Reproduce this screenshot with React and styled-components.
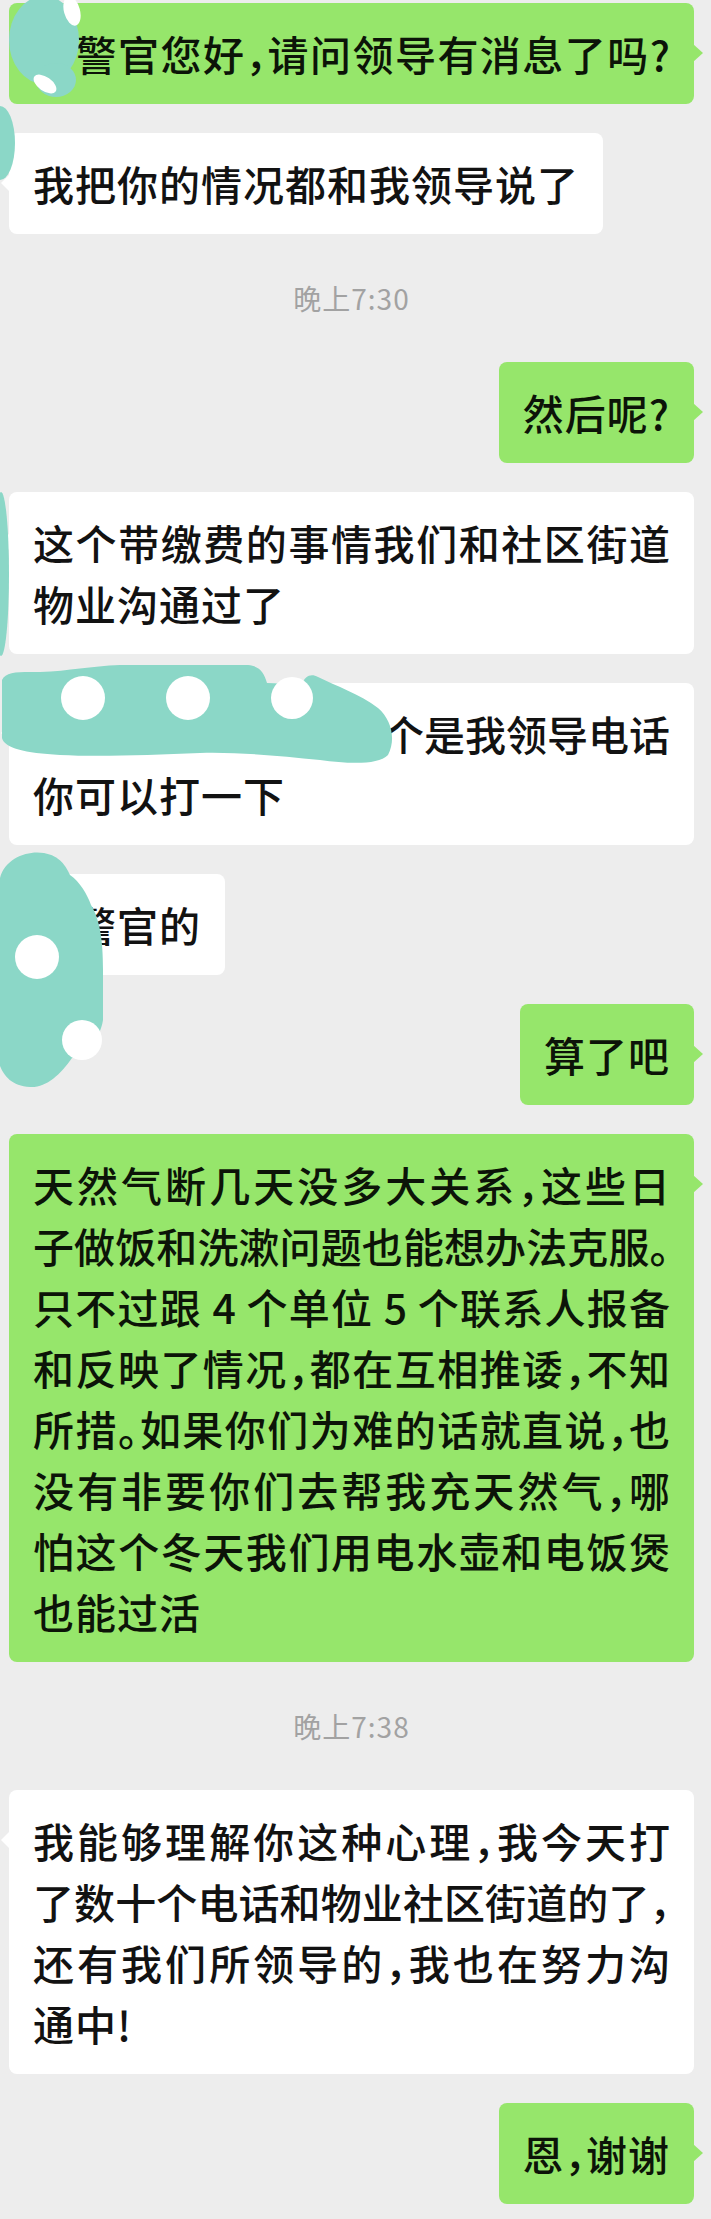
import React from "react";
import styled, { createGlobalStyle } from "styled-components";

const GlobalStyle = createGlobalStyle`
  html, body {
    margin: 0;
    padding: 0;
    background: #ededed;
    overflow: hidden;
  }
`;

const Page = styled.div`
  position: relative;
  box-sizing: border-box;
  width: 711px;
  min-height: 2219px;
  padding: 3px 17px 15px 9px;
  display: flex;
  flex-direction: column;
  gap: 29px;
  background: #ededed;
  font-family: "Noto Sans CJK SC", "Noto Sans", sans-serif;
`;

const Row = styled.div`
  display: flex;
  justify-content: ${(props) => (props.$mine ? "flex-end" : "flex-start")};
`;

const Bubble = styled.div`
  position: relative;
  box-sizing: border-box;
  width: ${(props) => (props.$wide ? "685px" : "auto")};
  padding: 20px 24px;
  border-radius: 8px;
  background: ${(props) => (props.$mine ? "#96e66b" : "#ffffff")};
  color: ${(props) => (props.$mine ? "#0c1408" : "#121212")};
  font-size: 41px;
  font-weight: 500;
  line-height: 61px;
  font-feature-settings: "halt";

  &::after {
    content: "";
    position: absolute;
    top: 41px;
    ${(props) => (props.$mine ? "right: -9px;" : "left: -8px;")}
    border-top: 9px solid transparent;
    border-bottom: 9px solid transparent;
    ${(props) =>
      props.$mine
        ? "border-left: 10px solid #96e66b;"
        : "border-right: 9px solid #ffffff;"}
  }
`;

const Line = styled.div`
  white-space: nowrap;
  letter-spacing: ${(props) => (props.$full ? "0" : "1px")};
  text-align: ${(props) => (props.$full ? "justify" : "left")};
  text-align-last: ${(props) => (props.$full ? "justify" : "auto")};
`;

// blank slot under a scribble, keeps the words after it in place
const Hidden = styled.span`
  display: inline-block;
  width: ${(props) => props.$w}px;
`;

const Stamp = styled.div`
  height: 70px;
  display: flex;
  align-items: center;
  justify-content: center;
  font-size: 28px;
  letter-spacing: 1px;
  color: #a2a2a2;
`;

const Scribbles = styled.svg`
  position: absolute;
  top: 0;
  left: 0;
  pointer-events: none;
`;

const TEAL = "#8bd7c7";

const Redactions = () => (
  <Scribbles width="711" height="2219" viewBox="0 0 711 2219">
    {/* top left, over the first bubble */}
    <ellipse cx="44" cy="40" rx="35" ry="44" fill={TEAL} />
    <ellipse cx="56" cy="80" rx="20" ry="17" fill={TEAL} />
    <ellipse cx="72" cy="11" rx="8" ry="15" fill="#ffffff" transform="rotate(-15 72 11)" />
    <ellipse cx="45" cy="84" rx="13" ry="7" fill="#ffffff" transform="rotate(35 45 84)" />

    <ellipse cx="0" cy="143" rx="15" ry="37" fill={TEAL} />
    <ellipse cx="1" cy="574" rx="8" ry="82" fill={TEAL} />

    {/* long stroke over the phone number */}
    <path
      d="M 2 680
         C 6 671, 20 672, 40 672
         C 70 671, 90 666, 120 665
         L 248 665
         C 260 666, 264 673, 267 683
         L 302 684
         C 305 676, 311 673, 318 677
         C 336 686, 360 694, 378 708
         C 392 720, 396 740, 388 755
         C 378 765, 350 764, 320 760
         C 280 756, 240 752, 200 753
         C 150 755, 100 757, 60 755
         C 25 753, 4 748, 2 738 Z"
      fill={TEAL}
    />
    <circle cx="83" cy="698" r="22" fill="#ffffff" />
    <circle cx="188" cy="698" r="22" fill="#ffffff" />
    <circle cx="292" cy="698" r="21" fill="#ffffff" />

    {/* vertical stroke over the name */}
    <path
      d="M 0 878
         C 5 858, 28 850, 44 853
         C 60 856, 66 866, 70 875
         C 80 882, 87 894, 91 905
         C 100 920, 103 940, 103 970
         L 103 1020
         C 100 1040, 86 1050, 72 1058
         C 60 1075, 46 1088, 30 1087
         C 12 1086, 4 1076, 0 1066 Z"
      fill={TEAL}
    />
    <circle cx="37" cy="957" r="22" fill="#ffffff" />
    <circle cx="82" cy="1040" r="20" fill="#ffffff" />
  </Scribbles>
);

const App = () => {
  return (
    <Page>
      <GlobalStyle />

      <Row $mine>
        <Bubble $mine $wide>
          <Line $full>　警官您好，请问领导有消息了吗?</Line>
        </Bubble>
      </Row>

      <Row>
        <Bubble>
          <Line>我把你的情况都和我领导说了</Line>
        </Bubble>
      </Row>

      <Stamp>晚上7:30</Stamp>

      <Row $mine>
        <Bubble $mine>
          <Line>然后呢?</Line>
        </Bubble>
      </Row>

      <Row>
        <Bubble $wide>
          <Line $full>这个带缴费的事情我们和社区街道</Line>
          <Line>物业沟通过了</Line>
        </Bubble>
      </Row>

      <Row>
        <Bubble $wide>
          <Line $full>
            <Hidden $w={350} />
            个是我领导电话
          </Line>
          <Line>你可以打一下</Line>
        </Bubble>
      </Row>

      <Row>
        <Bubble>
          <Line>　警官的</Line>
        </Bubble>
      </Row>

      <Row $mine>
        <Bubble $mine>
          <Line>算了吧</Line>
        </Bubble>
      </Row>

      <Row $mine>
        <Bubble $mine $wide>
          <Line $full>天然气断几天没多大关系，这些日</Line>
          <Line $full>子做饭和洗漱问题也能想办法克服。</Line>
          <Line $full>只不过跟 4 个单位 5 个联系人报备</Line>
          <Line $full>和反映了情况，都在互相推诿，不知</Line>
          <Line $full>所措。如果你们为难的话就直说，也</Line>
          <Line $full>没有非要你们去帮我充天然气，哪</Line>
          <Line $full>怕这个冬天我们用电水壶和电饭煲</Line>
          <Line>也能过活</Line>
        </Bubble>
      </Row>

      <Stamp>晚上7:38</Stamp>

      <Row>
        <Bubble $wide>
          <Line $full>我能够理解你这种心理，我今天打</Line>
          <Line $full>了数十个电话和物业社区街道的了，</Line>
          <Line $full>还有我们所领导的，我也在努力沟</Line>
          <Line>通中!</Line>
        </Bubble>
      </Row>

      <Row $mine>
        <Bubble $mine>
          <Line>恩，谢谢</Line>
        </Bubble>
      </Row>

      <Redactions />
    </Page>
  );
};

export default App;
